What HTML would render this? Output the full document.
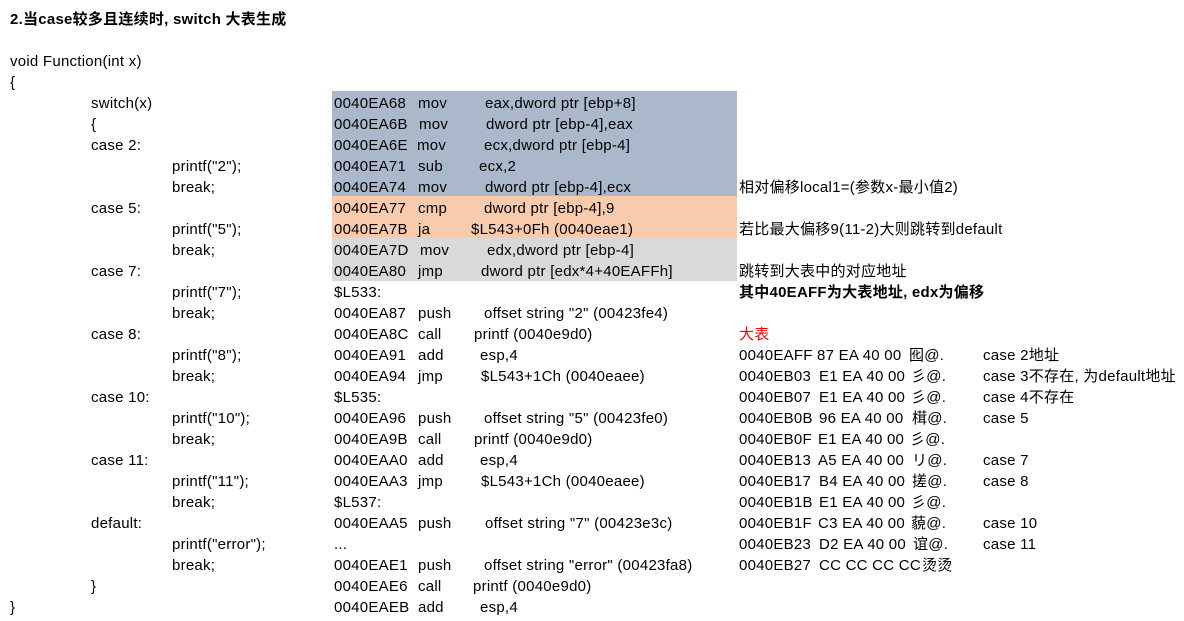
<!DOCTYPE html>
<html><head><meta charset="utf-8"><style>
body{margin:0;width:1184px;height:621px;background:#fff;position:relative;overflow:hidden;font-family:"Liberation Sans","Noto Sans CJK SC",sans-serif;font-size:15px;color:#000;letter-spacing:0.25px}
.r{position:absolute;left:0;width:1184px;height:21px;line-height:23px;white-space:pre}
.r span{position:absolute;top:0}
.bg{position:absolute;left:332px;width:405px}
</style></head><body>
<div class="bg" style="top:91px;height:105px;background:#abb8cb"></div>
<div class="bg" style="top:196px;height:42px;background:#f8cbad"></div>
<div class="bg" style="top:238px;height:43px;background:#d9d9d9"></div>
<div class="r" style="top:8px;font-weight:bold"><span style="left:10px">2.当case较多且连续时, switch 大表生成</span></div>

<div class="r" style="top:50px"><span style="left:10px">void Function(int x)</span></div>
<div class="r" style="top:71px"><span style="left:10px">{</span></div>
<div class="r" style="top:92px"><span style="left:91px">switch(x)</span><span style="left:334px">0040EA68</span><span style="left:418px">mov</span><span style="left:485px">eax,dword ptr [ebp+8]</span></div>
<div class="r" style="top:113px"><span style="left:91px">{</span><span style="left:334px">0040EA6B</span><span style="left:419px">mov</span><span style="left:486px">dword ptr [ebp-4],eax</span></div>
<div class="r" style="top:134px"><span style="left:91px">case 2:</span><span style="left:334px">0040EA6E</span><span style="left:417px">mov</span><span style="left:484px">ecx,dword ptr [ebp-4]</span></div>
<div class="r" style="top:155px"><span style="left:172px">printf("2");</span><span style="left:334px">0040EA71</span><span style="left:418px">sub</span><span style="left:479px">ecx,2</span></div>
<div class="r" style="top:176px"><span style="left:172px">break;</span><span style="left:334px">0040EA74</span><span style="left:418px">mov</span><span style="left:485px">dword ptr [ebp-4],ecx</span><span style="left:739px">相对偏移local1=(参数x-最小值2)</span></div>
<div class="r" style="top:197px"><span style="left:91px">case 5:</span><span style="left:334px">0040EA77</span><span style="left:418px">cmp</span><span style="left:484px">dword ptr [ebp-4],9</span></div>
<div class="r" style="top:218px"><span style="left:172px">printf("5");</span><span style="left:334px">0040EA7B</span><span style="left:418px">ja</span><span style="left:471px">$L543+0Fh (0040eae1)</span><span style="left:739px">若比最大偏移9(11-2)大则跳转到default</span></div>
<div class="r" style="top:239px"><span style="left:172px">break;</span><span style="left:334px">0040EA7D</span><span style="left:420px">mov</span><span style="left:487px">edx,dword ptr [ebp-4]</span></div>
<div class="r" style="top:260px"><span style="left:91px">case 7:</span><span style="left:334px">0040EA80</span><span style="left:418px">jmp</span><span style="left:481px">dword ptr [edx*4+40EAFFh]</span><span style="left:739px">跳转到大表中的对应地址</span></div>
<div class="r" style="top:281px"><span style="left:172px">printf("7");</span><span style="left:334px">$L533:</span><span style="left:739px;font-weight:bold">其中40EAFF为大表地址, edx为偏移</span></div>
<div class="r" style="top:302px"><span style="left:172px">break;</span><span style="left:334px">0040EA87</span><span style="left:418px">push</span><span style="left:484px">offset string "2" (00423fe4)</span></div>
<div class="r" style="top:323px"><span style="left:91px">case 8:</span><span style="left:334px">0040EA8C</span><span style="left:418px">call</span><span style="left:474px">printf (0040e9d0)</span><span style="left:739px;color:#ff0000">大表</span></div>
<div class="r" style="top:344px"><span style="left:172px">printf("8");</span><span style="left:334px">0040EA91</span><span style="left:418px">add</span><span style="left:480px">esp,4</span><span style="left:739px">0040EAFF</span><span style="left:817px">87 EA 40 00</span><span style="left:909px">囮@.</span><span style="left:983px">case 2地址</span></div>
<div class="r" style="top:365px"><span style="left:172px">break;</span><span style="left:334px">0040EA94</span><span style="left:418px">jmp</span><span style="left:481px">$L543+1Ch (0040eaee)</span><span style="left:739px">0040EB03</span><span style="left:819px">E1 EA 40 00</span><span style="left:911px">彡@.</span><span style="left:983px">case 3不存在, 为default地址</span></div>
<div class="r" style="top:386px"><span style="left:91px">case 10:</span><span style="left:334px">$L535:</span><span style="left:739px">0040EB07</span><span style="left:819px">E1 EA 40 00</span><span style="left:911px">彡@.</span><span style="left:983px">case 4不存在</span></div>
<div class="r" style="top:407px"><span style="left:172px">printf("10");</span><span style="left:334px">0040EA96</span><span style="left:418px">push</span><span style="left:484px">offset string "5" (00423fe0)</span><span style="left:739px">0040EB0B</span><span style="left:819px">96 EA 40 00</span><span style="left:912px">榵@.</span><span style="left:983px">case 5</span></div>
<div class="r" style="top:428px"><span style="left:172px">break;</span><span style="left:334px">0040EA9B</span><span style="left:418px">call</span><span style="left:474px">printf (0040e9d0)</span><span style="left:739px">0040EB0F</span><span style="left:818px">E1 EA 40 00</span><span style="left:910px">彡@.</span></div>
<div class="r" style="top:449px"><span style="left:91px">case 11:</span><span style="left:334px">0040EAA0</span><span style="left:418px">add</span><span style="left:480px">esp,4</span><span style="left:739px">0040EB13</span><span style="left:818px">A5 EA 40 00</span><span style="left:912px">リ@.</span><span style="left:983px">case 7</span></div>
<div class="r" style="top:470px"><span style="left:172px">printf("11");</span><span style="left:334px">0040EAA3</span><span style="left:418px">jmp</span><span style="left:481px">$L543+1Ch (0040eaee)</span><span style="left:739px">0040EB17</span><span style="left:819px">B4 EA 40 00</span><span style="left:912px">搓@.</span><span style="left:983px">case 8</span></div>
<div class="r" style="top:491px"><span style="left:172px">break;</span><span style="left:334px">$L537:</span><span style="left:739px">0040EB1B</span><span style="left:819px">E1 EA 40 00</span><span style="left:911px">彡@.</span></div>
<div class="r" style="top:512px"><span style="left:91px">default:</span><span style="left:334px">0040EAA5</span><span style="left:418px">push</span><span style="left:485px">offset string "7" (00423e3c)</span><span style="left:739px">0040EB1F</span><span style="left:818px">C3 EA 40 00</span><span style="left:911px">藐@.</span><span style="left:983px">case 10</span></div>
<div class="r" style="top:533px"><span style="left:172px">printf("error");</span><span style="left:334px">...</span><span style="left:739px">0040EB23</span><span style="left:819px">D2 EA 40 00</span><span style="left:913px">谊@.</span><span style="left:983px">case 11</span></div>
<div class="r" style="top:554px"><span style="left:172px">break;</span><span style="left:334px">0040EAE1</span><span style="left:418px">push</span><span style="left:484px">offset string "error" (00423fa8)</span><span style="left:739px">0040EB27</span><span style="left:819px">CC CC CC CC</span><span style="left:922px">烫烫</span></div>
<div class="r" style="top:575px"><span style="left:91px">}</span><span style="left:334px">0040EAE6</span><span style="left:418px">call</span><span style="left:473px">printf (0040e9d0)</span></div>
<div class="r" style="top:596px"><span style="left:10px">}</span><span style="left:334px">0040EAEB</span><span style="left:418px">add</span><span style="left:480px">esp,4</span></div>
</body></html>
